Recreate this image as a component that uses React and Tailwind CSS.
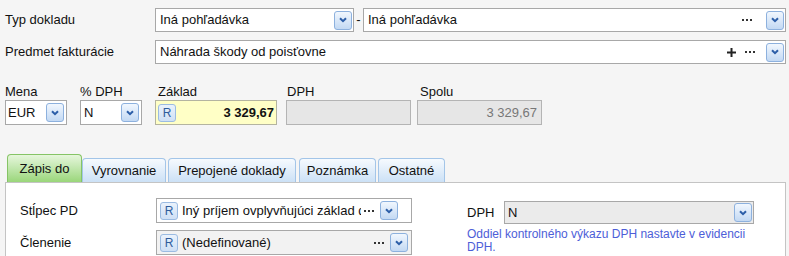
import React from "react";

function Chevron() {
  return (
    <svg width="8" height="6" viewBox="0 0 8 6" className="block">
      <path d="M1 1.2 L4 4.2 L7 1.2" fill="none" stroke="#2c5ea8" strokeWidth="2" />
    </svg>
  );
}

function DropButton({ className = "" }) {
  return (
    <div
      className={`flex h-[19px] w-[18px] shrink-0 items-center justify-center rounded-[3px] border border-[#8db1de] bg-gradient-to-b from-[#f1f7fe] to-[#c3d9f3] ${className}`}
    >
      <Chevron />
    </div>
  );
}

function Dots({ className = "" }) {
  return (
    <div className={`flex shrink-0 items-center gap-[2px] ${className}`}>
      <span className="h-[2px] w-[2px] bg-[#333]" />
      <span className="h-[2px] w-[2px] bg-[#333]" />
      <span className="h-[2px] w-[2px] bg-[#333]" />
    </div>
  );
}

function Plus({ className = "" }) {
  return (
    <svg width="9" height="9" viewBox="0 0 9 9" className={`block shrink-0 ${className}`}>
      <path d="M4.5 0 V9 M0 4.5 H9" stroke="#222" strokeWidth="2" />
    </svg>
  );
}

function RBadge() {
  return (
    <div className="flex h-[18px] w-[18px] shrink-0 items-center justify-center rounded-[3px] border border-[#9bbbe2] bg-gradient-to-b from-[#eaf2fc] to-[#cfe0f5] text-[12px] leading-none text-[#2f5c9c]">
      R
    </div>
  );
}

function Tab({ label, active, width }) {
  if (active) {
    return (
      <div
        className={`flex h-[28px] ${width} items-center justify-center rounded-t-[4px] border border-b-0 border-[#86c466] bg-gradient-to-b from-[#e6f6dc] to-[#9ad67a] text-[13px] text-[#111]`}
      >
        {label}
      </div>
    );
  }
  return (
    <div
      className={`flex h-[24px] ${width} items-center justify-center rounded-t-[4px] border border-b-0 border-[#a3c5e8] bg-gradient-to-b from-[#f6fafe] to-[#cce1f6] text-[13px] text-[#111]`}
    >
      {label}
    </div>
  );
}

export default function App() {
  return (
    <div className="h-[256px] w-[789px] overflow-hidden bg-[#f5f5f5] font-['Liberation_Sans',Arial,sans-serif] text-[13px] text-[#111]">
      {/* Typ dokladu */}
      <div className="mt-[8px] flex h-[24px] items-center">
        <div className="w-[155px] pl-[5px]">Typ dokladu</div>
        <div className="flex h-full w-[199px] items-center border border-[#a8a8a8] bg-white pl-[4px] pr-[1px]">
          <span className="flex-1">Iná pohľadávka</span>
          <DropButton />
        </div>
        <div className="w-[9px] text-center">-</div>
        <div className="mr-[3px] flex h-full flex-1 items-center border border-[#a8a8a8] bg-white pl-[4px] pr-[1px]">
          <span className="flex-1">Iná pohľadávka</span>
          <Dots />
          <DropButton className="ml-[14px]" />
        </div>
      </div>

      {/* Predmet fakturácie */}
      <div className="mt-[8px] flex h-[24px] items-center">
        <div className="w-[155px] pl-[5px]">Predmet fakturácie</div>
        <div className="mr-[3px] flex h-full flex-1 items-center border border-[#a8a8a8] bg-white pl-[4px] pr-[1px]">
          <span className="flex-1">Náhrada škody od poisťovne</span>
          <Plus />
          <Dots className="ml-[9px]" />
          <DropButton className="ml-[11px]" />
        </div>
      </div>

      {/* Sums */}
      <div className="mt-[19px] flex items-start pl-[5px]">
        <div className="w-[62px]">
          <div className="h-[17px] leading-[17px]">Mena</div>
          <div className="flex h-[25px] items-center border border-[#a8a8a8] bg-white pl-[2px] pr-[2px]">
            <span className="flex-1">EUR</span>
            <DropButton />
          </div>
        </div>
        <div className="ml-[13px] w-[62px]">
          <div className="h-[17px] leading-[17px]">% DPH</div>
          <div className="flex h-[25px] items-center border border-[#a8a8a8] bg-white pl-[3px] pr-[2px]">
            <span className="flex-1">N</span>
            <DropButton />
          </div>
        </div>
        <div className="ml-[13px] w-[122px]">
          <div className="h-[17px] pl-[3px] leading-[17px]">Základ</div>
          <div className="flex h-[25px] items-center border border-[#b4b4a0] bg-[#ffffc6] pl-[2px] pr-[2px]">
            <RBadge />
            <span className="flex-1 text-right font-bold">3 329,67</span>
          </div>
        </div>
        <div className="ml-[9px] w-[125px]">
          <div className="h-[17px] pl-[1px] leading-[17px]">DPH</div>
          <div className="h-[25px] border border-[#b4b4b4] bg-[#e6e6e6]" />
        </div>
        <div className="ml-[6px] w-[125px]">
          <div className="h-[17px] pl-[3px] leading-[17px]">Spolu</div>
          <div className="flex h-[25px] items-center justify-end border border-[#b4b4b4] bg-[#e6e6e6] pr-[4px] text-[#777]">
            3 329,67
          </div>
        </div>
      </div>

      {/* Tabs */}
      <div className="mt-[29px] flex items-end pl-[7px]">
        <Tab label="Zápis do" active width="w-[75px]" />
        <Tab label="Vyrovnanie" width="w-[84px]" />
        <div className="w-[2px]" />
        <Tab label="Prepojené doklady" width="w-[128px]" />
        <div className="w-[3px]" />
        <Tab label="Poznámka" width="w-[77px]" />
        <div className="w-[2px]" />
        <Tab label="Ostatné" width="w-[67px]" />
      </div>

      <div className="ml-[5px] mr-[3px] flex h-[100px] border border-[#c4c4c4] bg-white pt-[15px]">
        <div className="flex w-[407px] flex-col gap-[7px]">
          <div className="flex h-[25px] items-center">
            <div className="w-[150px] pl-[14px]">Stĺpec PD</div>
            <div className="flex h-full w-[256px] items-center border border-[#a8a8a8] bg-white pl-[3px] pr-[3px]">
              <RBadge />
              <span className="ml-[4px] w-[179px] overflow-hidden whitespace-nowrap">
                Iný príjem ovplyvňujúci základ dane
              </span>
              <Dots className="ml-[3px]" />
              <DropButton className="ml-[6px]" />
            </div>
          </div>
          <div className="flex h-[25px] items-center">
            <div className="w-[150px] pl-[14px]">Členenie</div>
            <div className="flex h-full w-[256px] items-center border border-[#a8a8a8] bg-[#f2f2f2] pl-[3px] pr-[3px]">
              <RBadge />
              <span className="ml-[4px] flex-1">(Nedefinované)</span>
              <Dots />
              <DropButton className="ml-[6px]" />
            </div>
          </div>
        </div>

        <div className="ml-[54px] w-[290px] pt-[3px]">
          <div className="flex h-[23px] items-center">
            <div className="w-[37px]">DPH</div>
            <div className="flex h-full w-[250px] items-center border border-[#a8a8a8] bg-[#ebebeb] pl-[3px] pr-[1px]">
              <span className="flex-1">N</span>
              <DropButton />
            </div>
          </div>
          <div className="mt-[4px] w-[288px] text-[12px] leading-[13px] text-[#4d5ed8]">
            Oddiel kontrolného výkazu DPH nastavte v evidencii DPH.
          </div>
        </div>
      </div>
    </div>
  );
}
